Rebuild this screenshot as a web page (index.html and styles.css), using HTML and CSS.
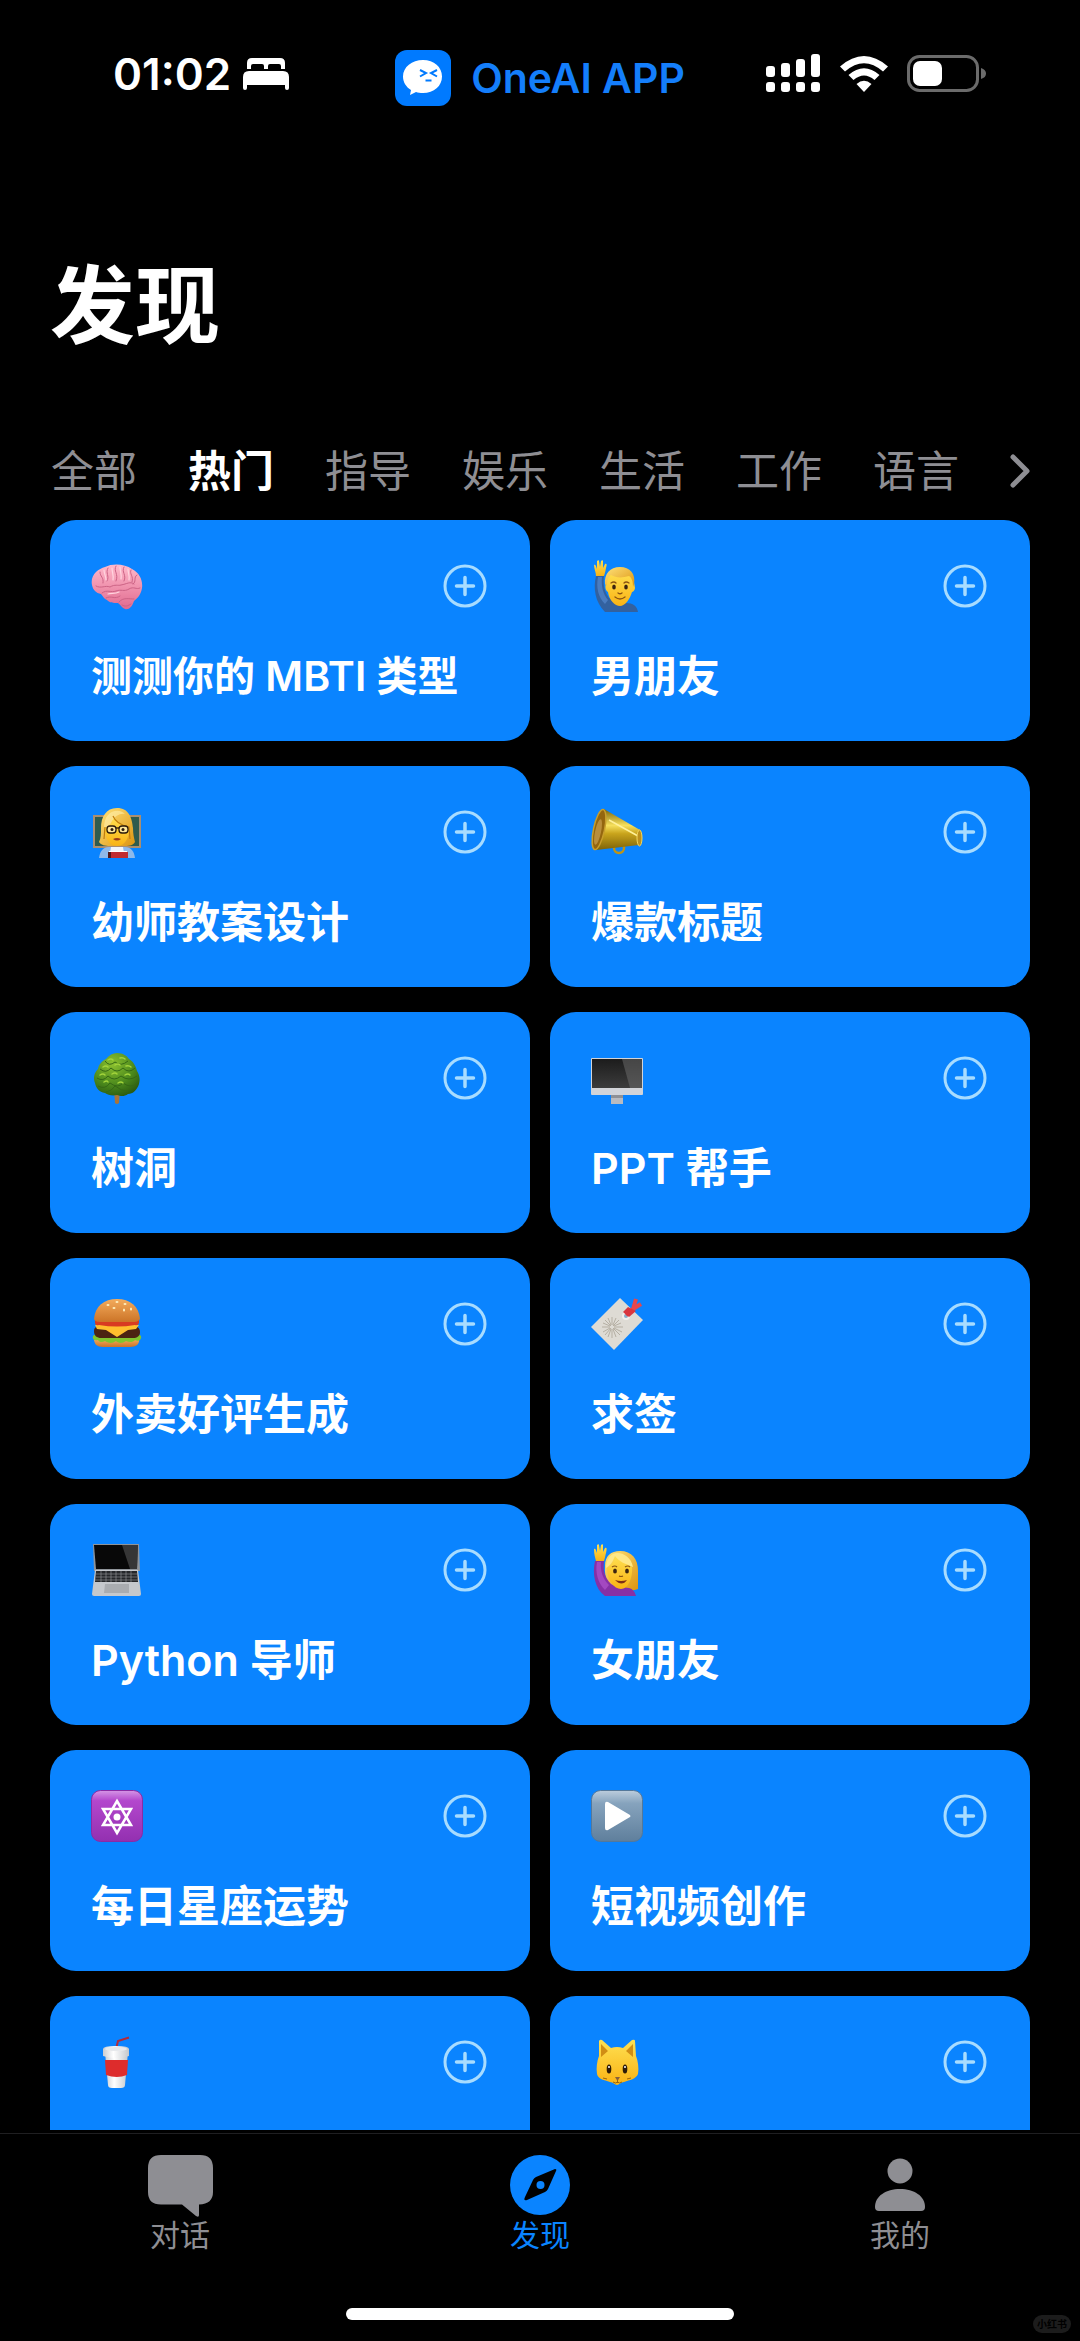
FILE: index.html
```html
<!DOCTYPE html>
<html lang="zh-CN">
<head>
    <meta charset="UTF-8">
    <meta name="viewport" content="width=device-width, initial-scale=1.0">
    <title>OneAI APP - 发现</title>
    <link rel="stylesheet" href="styles.css">
</head>
<body>
<svg class="defs" aria-hidden="true">
    <symbol id="plus" viewBox="0 0 44 44">
        <circle cx="22" cy="22" r="20" fill="none" stroke="currentColor" stroke-width="3"/>
        <path d="M22 13.500v17M13.500 22h17" stroke="currentColor" stroke-width="3.500" stroke-linecap="round"/>
    </symbol>
    <linearGradient id="pink" x1="0" y1="0" x2="0" y2="1"><stop offset="0" stop-color="#ffb9cb"/><stop offset="1" stop-color="#e06a8f"/></linearGradient>
    <linearGradient id="skin" x1="0" y1="0" x2="0" y2="1"><stop offset="0" stop-color="#ffe052"/><stop offset="1" stop-color="#f9b314"/></linearGradient>
    <linearGradient id="hair" x1="0" y1="0" x2="1" y2="1"><stop offset="0" stop-color="#ffe27a"/><stop offset="1" stop-color="#dd9410"/></linearGradient>
    <linearGradient id="gold" x1="0" y1="0" x2="0" y2="1"><stop offset="0" stop-color="#7a6208"/><stop offset=".4" stop-color="#f6e05c"/><stop offset=".6" stop-color="#c9a41c"/><stop offset="1" stop-color="#7d6208"/></linearGradient>
    <linearGradient id="glass" x1="0" y1="0" x2="0" y2="1"><stop offset="0" stop-color="#1c1c1c"/><stop offset="1" stop-color="#3c3c3c"/></linearGradient>
    <linearGradient id="bun" x1="0" y1="0" x2="0" y2="1"><stop offset="0" stop-color="#f3ab5c"/><stop offset="1" stop-color="#cc7427"/></linearGradient>
    <linearGradient id="purple" x1="0" y1="0" x2="0" y2="1"><stop offset="0" stop-color="#d596e6"/><stop offset=".2" stop-color="#b347cd"/><stop offset="1" stop-color="#9330b0"/></linearGradient>
    <linearGradient id="slate" x1="0" y1="0" x2="0" y2="1"><stop offset="0" stop-color="#bccddd"/><stop offset=".25" stop-color="#86a3bd"/><stop offset="1" stop-color="#5f7f9c"/></linearGradient>
    <linearGradient id="cup" x1="0" y1="0" x2="1" y2="0"><stop offset="0" stop-color="#c9ccd0"/><stop offset=".4" stop-color="#ffffff"/><stop offset="1" stop-color="#c4c7cb"/></linearGradient>
    <radialGradient id="leaf" cx=".4" cy=".25" r=".8"><stop offset="0" stop-color="#8cc12f"/><stop offset=".6" stop-color="#4c8a1d"/><stop offset="1" stop-color="#2a5a10"/></radialGradient>
</svg>

<header class="statusbar">
    <div class="status-left">
        <time>01:02</time>
        <svg class="bed" viewBox="0 0 46 32" aria-hidden="true">
            <path fill="#fff" d="M4 11V5q0-5 5-5h28q5 0 5 5v6h-4V8q0-2-2-2H27q-2 0-2 2v3h-4V8q0-2-2-2H10q-2 0-2 2v3zM0 19q0-6 6-6h34q6 0 6 6v11q0 2-2 2t-2-2v-3H4v3q0 2-2 2t-2-2z"/>
        </svg>
    </div>
    <div class="brand">
        <svg class="logo" viewBox="0 0 56 56" aria-hidden="true">
            <rect width="56" height="56" rx="12" fill="#007aff"/>
            <path fill="#fff" d="M28 10c11 0 19 7 19 16.500S39 43 28 43c-3 0-5-.4-7-1l-6 3 1-5C11 37 8 32 8 26.500 8 17 17 10 28 10z"/>
            <path fill="none" stroke="#007aff" stroke-width="2" d="M25 20l6 3-6 3.500M42 20l-6 3 6 3.500M30.500 30.500h6"/>
        </svg>
        <span>OneAI APP</span>
    </div>
    <div class="status-right">
        <svg class="signal" viewBox="0 0 55 40" fill="#fff" aria-hidden="true">
            <rect x="0" y="12" width="9" height="11" rx="3"/><rect x="15" y="9" width="9" height="14" rx="3"/><rect x="30" y="5" width="9" height="18" rx="3"/><rect x="45" y="0" width="9" height="23" rx="3"/>
            <rect x="0" y="28" width="9" height="10" rx="3"/><rect x="15" y="28" width="9" height="10" rx="3"/><rect x="30" y="28" width="9" height="10" rx="3"/><rect x="45" y="28" width="9" height="10" rx="3"/>
        </svg>
        <svg class="wifi" viewBox="0 0 48 36" aria-hidden="true">
            <path fill="#fff" d="M24 36l-7.500-8q7.500-6.500 15 0zM8.500 19l5 5q10.500-9 21 0l5-5Q24 5.500 8.500 19zM0 10.500l5 5q19-16.500 38 0l5-5Q24-10.500 0 10.500z"/>
        </svg>
        <svg class="battery" viewBox="0 0 80 38" aria-hidden="true">
            <rect x="1.500" y="1.500" width="69" height="34" rx="11" fill="none" stroke="#6b6b6b" stroke-width="3"/>
            <path d="M74 13q5 1.500 5 5.500t-5 5.500z" fill="#6b6b6b"/>
            <rect x="6" y="6" width="29" height="25" rx="7" fill="#fff"/>
        </svg>
    </div>
</header>

<h1>发现</h1>

<nav class="categories" aria-label="分类">
    <button type="button">全部</button>
    <button type="button" class="active">热门</button>
    <button type="button">指导</button>
    <button type="button">娱乐</button>
    <button type="button">生活</button>
    <button type="button">工作</button>
    <button type="button">语言</button>
    <button type="button" class="more" aria-label="更多">
        <svg viewBox="0 0 20 34" fill="none" stroke="#8e8e93" stroke-width="5" stroke-linecap="round" stroke-linejoin="round"><path d="M3 3l14 14L3 31"/></svg>
    </button>
</nav>

<main class="cards">
    <article class="card">
        <svg class="emoji" viewBox="0 0 52 52">
            <path fill="url(#pink)" d="M1 25C-1 15 7 9 14 7 22 3 34 4 41 9c8 4 11 12 10 19-1 6-4 10-8 13-2 6-5 9-9 8-3-1-4-4-7-6-5 0-8 0-11-3-3-1-4-4-6-6-5-1-8-4-9-9z"/>
            <path fill="none" stroke="#cc6385" stroke-width="1" stroke-linecap="round" d="M5 26c5 3 9-1 14 1 5-3 8-1 11-2 6-1 9-4 13-1M9 12c0 5 4 5 3 11M17 8c-3 5 2 8-1 13M25 6c-3 5 3 8 0 15M33 7c-3 5 3 8 0 14M40 10c-2 4 3 6 1 12M46 15c-4 2 0 7-4 9M11 33c5-4 9 0 14-2s8 1 13-2 7 1 11-1M28 42c4-5 10-3 15-3M15 38c5-3 9 2 14-2M31 45c3 2 6 1 9-1"/>
            <path fill="none" stroke="#ffd5df" stroke-width="1.200" stroke-linecap="round" d="M13 10c0 4 2 6 2 10M21 8c0 4 2 8 1 12M29 7c0 4 2 8 1 12M37 9c0 4 2 7 1 11M17 34c4-1 7 0 11-2"/>
        </svg>
        <button type="button" class="add" aria-label="添加"><svg><use href="#plus"/></svg></button>
        <h2 class="long">测测你的 MBTI 类型</h2>
    </article>
    <article class="card">
        <svg class="emoji" viewBox="0 0 52 52">
            <path fill="#33619f" d="M5 16h8c-1 8 0 15 5 22 6 3 12 5 17 5 7 0 11 3 12 9H14C4 42 2 28 5 16z"/>
            <path fill="#4a7cc0" d="M7 17h4c-1 9 1 17 6 23l-3 4C7 37 5 27 7 17z"/>
            <path fill="url(#skin)" d="M5 16c0-4-2-7-2-11 1-1 2 0 3 4L6 1c1-1 2-1 2 0l1 6 1-6c1-1 2-1 2 0v7l2-4c2-1 2 1 1 4-1 5-1 5-2 8z"/>
            <path fill="url(#skin)" d="M15 22c1-8 6-11 14-11s13 4 14 11l1 6c0 2-2 4-3 4-2 7-7 14-12 14s-11-6-12-14c-3-2-3-5-2-10z"/>
            <path fill="url(#hair)" d="M14 24c-1-10 5-17 15-17s16 7 14 17l-1 3c0-5-1-9-4-11-7 2-13 2-18-1-3 2-4 5-4 11z"/>
            <ellipse cx="23" cy="27" rx="1.800" ry="2.500" fill="#3b2410"/><ellipse cx="35" cy="27" rx="1.800" ry="2.500" fill="#3b2410"/>
            <path fill="none" stroke="#8c5512" stroke-width="1.300" stroke-linecap="round" d="M20 23q3-2 5 0M33 23q2-2 5 0M27 33q2 1.500 4 0M24 37q5 4 10 0"/>
        </svg>
        <button type="button" class="add" aria-label="添加"><svg><use href="#plus"/></svg></button>
        <h2>男朋友</h2>
    </article>
    <article class="card">
        <svg class="emoji" viewBox="0 0 52 52">
            <rect x="2" y="9" width="48" height="33" fill="#a98e70"/><rect x="4" y="11" width="44" height="29" fill="#2f5b4e"/>
            <path fill="url(#hair)" d="M26 2c12 0 15 10 16 20 0 6 1 10 2 14-2 4-7 4-12 4H19c-5 0-9-1-11-4 2-4 2-8 2-14C10 11 15 2 26 2z"/>
            <path fill="#8eb9ea" d="M8 52c1-7 4-11 10-11h16c6 0 9 4 10 11z"/>
            <path fill="#f3f5f8" d="M20 41h12l1 6H19z"/>
            <path fill="url(#skin)" d="M14 21c6-2 8-6 8-11 4 6 9 8 16 11 1 10-4 19-12 19s-13-9-12-19z"/>
            <path fill="#fff0ae" d="M17 9c5-6 14-5 17-1-5-1-10 2-13 7-2 4-4 6-8 7 0-5 1-10 4-13z" opacity=".6"/>
            <path fill="none" stroke="#c17d0c" stroke-width="1.200" d="M22 10q3 8 16 11l1 12M14 21l-1 12"/>
            <rect x="16" y="20" width="9" height="7" rx="3" fill="#ffe899" stroke="#2a1a0c" stroke-width="1.300"/><rect x="28" y="20" width="9" height="7" rx="3" fill="#ffe899" stroke="#2a1a0c" stroke-width="1.300"/>
            <path stroke="#2a1a0c" stroke-width="1.300" d="M25 22h3"/>
            <circle cx="21" cy="23.500" r="1.500" fill="#2a1a0c"/><circle cx="32" cy="23.500" r="1.500" fill="#2a1a0c"/>
            <path fill="#9a3b1a" d="M22 33q4-2 8 0-4 3-8 0z"/>
            <rect x="17" y="46" width="20" height="6" fill="#c02c31"/><rect x="17" y="46" width="3" height="6" fill="#52181a"/><path stroke="#fff" d="M18 45.500h18"/>
        </svg>
        <button type="button" class="add" aria-label="添加"><svg><use href="#plus"/></svg></button>
        <h2>幼师教案设计</h2>
    </article>
    <article class="card">
        <svg class="emoji" viewBox="0 0 52 52">
            <circle cx="28" cy="42" r="5" fill="none" stroke="#bd9418" stroke-width="2.500"/>
            <path fill="url(#gold)" d="M13 3l36 21c3 3 2 13-1 15L5 44z"/>
            <path fill="none" stroke="#fff19a" stroke-width="1.500" d="M18 14l29 16"/>
            <ellipse cx="8" cy="23.500" rx="5.500" ry="20.500" transform="rotate(12 8 23.500)" fill="#94660f" stroke="#c79e2c" stroke-width="1.500"/>
            <ellipse cx="7" cy="26" rx="3" ry="13" transform="rotate(12 7 26)" fill="#b98e3c"/>
            <ellipse cx="48.500" cy="32" rx="2.500" ry="8" fill="#bb8f1d" stroke="#f3d75e"/>
        </svg>
        <button type="button" class="add" aria-label="添加"><svg><use href="#plus"/></svg></button>
        <h2>爆款标题</h2>
    </article>
    <article class="card">
        <svg class="emoji" viewBox="0 0 52 52">
            <path fill="#a8743a" d="M23 38h6l-1 13q-2 2-4 0z"/>
            <path fill="url(#leaf)" d="M26 1c6 0 10 3 12 6 5 3 7 8 8 12 3 5 3 9 2 13-2 6-6 10-11 10-4 3-8 2-11 1-5 1-9 0-12-2-6-1-9-5-10-10-2-5-1-10 3-14 1-5 4-8 8-10 3-4 7-6 11-6z"/>
            <g fill="none" stroke="#356815" stroke-width="1"><path d="M14 9q4 6 10 1 6 5 13-1M9 17q6 5 11-1 6 6 12 0 6 6 12 0M6 26q6 4 11-2 6 6 13 0 8 6 16 0M7 34q7 4 12-3 8 6 13 0 8 6 14 0M15 40q6-1 9-6 6 5 13 5"/></g>
            <g fill="none" stroke="#a2d33b" stroke-width="1.500" stroke-linecap="round"><path d="M17 8q3-2 5 0M29 6q3-1 5 1M12 15q3-2 5 0M24 13q3-2 5 0M35 14q3-1 5 1M9 23q3-2 5 0M21 22q3-2 5 0M34 23q3-2 5 0M13 30q3-2 4 0M27 31q3-2 5 0"/></g>
        </svg>
        <button type="button" class="add" aria-label="添加"><svg><use href="#plus"/></svg></button>
        <h2>树洞</h2>
    </article>
    <article class="card">
        <svg class="emoji" viewBox="0 0 52 52">
            <path fill="#b9bbc0" d="M20 42h12v10H20z"/><path fill="#8f9196" d="M20 43h12v3H20z"/>
            <rect y="6" width="52" height="37" rx="1" fill="#d2d4d9"/>
            <rect x="1" y="7" width="50" height="29" fill="url(#glass)"/>
            <path fill="#707070" opacity=".5" d="M31 7h20v29H39z"/>
        </svg>
        <button type="button" class="add" aria-label="添加"><svg><use href="#plus"/></svg></button>
        <h2>PPT 帮手</h2>
    </article>
    <article class="card">
        <svg class="emoji" viewBox="0 0 52 52">
            <path fill="url(#bun)" d="M3 41h45c1 5-3 8-9 8H12c-6 0-9-3-9-8z"/>
            <path fill="#80c52f" d="M2 38q2-3 6 0h36q4-3 6 0c1 4-3 6-6 4-3 3-6 2-9 1-4 3-8 2-10 0-4 3-8 2-11 0-3 2-6 1-7-1-4 1-6-1-5-4z"/>
            <path fill="#4c2412" d="M3 33c0-4 3-5 7-5h32c4 0 7 2 7 6s-3 6-7 6H10c-4 0-7-2-7-7z"/>
            <path fill="#ffbf2e" d="M4 27h44l-3 4-8 1-11 7-11-7-9-1z"/>
            <path fill="#d83b22" d="M4 22h44v3q-1 3-4 2-18 3-36 0-4 1-4-2z"/>
            <path fill="url(#bun)" d="M3 21C4 8 13 1 26 1s22 7 23 20c-2 3-5 3-8 3H11c-3 0-7 0-8-3z"/>
            <g fill="#fff0be"><ellipse cx="17" cy="7" rx="1.500" ry="1"/><ellipse cx="26" cy="4" rx="1.500" ry="1"/><ellipse cx="34" cy="6" rx="1.500" ry="1"/><ellipse cx="23" cy="10" rx="1.500" ry="1"/><ellipse cx="33" cy="12" rx="1" ry="1.500"/><ellipse cx="40" cy="11" rx="1" ry="1.500"/></g>
        </svg>
        <button type="button" class="add" aria-label="添加"><svg><use href="#plus"/></svg></button>
        <h2>外卖好评生成</h2>
    </article>
    <article class="card">
        <svg class="emoji" viewBox="0 0 52 52">
            <path fill="#dedbd4" d="M29 0l23 22-29 30L0 29z"/>
            <path stroke="#b5afa3" stroke-width="1" d="M21 19v8M21 31v9M11 29h8M23 29h9M14 22l6 6M22 30l7 7M28 22l-6 6M20 30l-6 7M17 20l3 7M22 31l3 8M12 25l7 3M23 30l8 4M25 20l-3 7M20 31l-3 8M30 25l-7 3M19 30l-7 4"/>
            <circle cx="35" cy="18" r="4" fill="#f2f0ed"/><circle cx="35" cy="18" r="2" fill="#89aeca"/>
            <path fill="none" stroke="#e6474c" stroke-width="4" stroke-linejoin="round" d="M35 17l7-6 3-10M42 11l8-5"/><path fill="#d9363f" d="M32 14l5-5 8 4-7 6z"/>
        </svg>
        <button type="button" class="add" aria-label="添加"><svg><use href="#plus"/></svg></button>
        <h2>求签</h2>
    </article>
    <article class="card">
        <svg class="emoji" viewBox="0 0 52 52">
            <path fill="#8f949a" d="M2 0h46l1 27H3z"/><path fill="#080808" d="M3 1h44l-1 24H5z"/><path fill="#555" opacity=".6" d="M31 1h16l-1 24h-7z"/>
            <path fill="#c5c8cc" d="M4 26h43l3 24q0 2-2 2H3q-2 0-2-2z"/>
            <path fill="#25272a" d="M5 27h41l1 11H4z"/>
            <path stroke="#93979c" d="M5 30h41M5 33h41M4 36h43M10 27v11M15 27v11M20 27v11M25 27v11M30 27v11M35 27v11M40 27v11" stroke-width=".6"/>
            <path fill="#a9acb0" d="M14 40h24v9H13z"/>
        </svg>
        <button type="button" class="add" aria-label="添加"><svg><use href="#plus"/></svg></button>
        <h2>Python 导师</h2>
    </article>
    <article class="card">
        <svg class="emoji" viewBox="0 0 52 52">
            <path fill="url(#hair)" d="M14 22C14 12 20 7 29 7c12 0 18 8 18 20v18c-6 2-14 2-20 0-9-2-14-10-13-23z"/>
            <path fill="#8730a5" d="M4 17h9c-1 8 0 16 7 23 7 4 12 3 18 4 4 1 6 4 7 8H14C4 45 1 30 4 17z"/>
            <path fill="#a348c1" d="M6 18h4c-1 9 2 17 8 23l-4 5C7 39 4 29 6 18z"/>
            <path fill="url(#skin)" d="M5 17c-1-4-2-7-2-12 1-1 2 0 3 4L6 1c1-1 2-1 2 0l1 6 1-6c1-1 2-1 2 0v7l2-4c2-1 2 1 1 5-1 4-1 5-2 8z"/>
            <path fill="url(#skin)" d="M16 24c4-2 7-7 8-13 5 7 11 7 17 12 1 11-4 22-11 22S16 36 16 24z"/>
            <path fill="#ffe887" d="M22 10c6-3 18 1 20 13-7-3-14-5-18-11-2 5-4 9-9 12 0-6 2-11 7-14z"/>
            <ellipse cx="24" cy="27" rx="1.900" ry="2.500" fill="#3b2410"/><ellipse cx="36" cy="27" rx="1.900" ry="2.500" fill="#3b2410"/>
            <path fill="none" stroke="#8c5512" stroke-width="1.200" d="M21 23q3-2 5 0M34 23q3-2 5 0M28 32q2 1 4 0"/><path fill="#7d2d17" d="M24 36q6 2 12 0-5 7-12 0z"/>
        </svg>
        <button type="button" class="add" aria-label="添加"><svg><use href="#plus"/></svg></button>
        <h2>女朋友</h2>
    </article>
    <article class="card">
        <svg class="emoji" viewBox="0 0 52 52">
            <rect x=".5" y=".5" width="51" height="51" rx="9" fill="url(#purple)" stroke="#8a2ba5"/>
            <path fill="none" stroke="#fff" stroke-width="2.500" d="M26 11l14 24H12zM26 43l14-24H12z"/><circle cx="26" cy="27" r="3.500" fill="#fff"/>
        </svg>
        <button type="button" class="add" aria-label="添加"><svg><use href="#plus"/></svg></button>
        <h2>每日星座运势</h2>
    </article>
    <article class="card">
        <svg class="emoji" viewBox="0 0 52 52">
            <rect x=".5" y=".5" width="51" height="51" rx="9" fill="url(#slate)" stroke="#54789a"/>
            <path fill="#fff" d="M14 14q0-3 3-2l22 13q1 1.500 0 2L17 40q-3 1-3-2z"/>
        </svg>
        <button type="button" class="add" aria-label="添加"><svg><use href="#plus"/></svg></button>
        <h2>短视频创作</h2>
    </article>
    <article class="card">
        <svg class="emoji" viewBox="0 0 52 52">
            <path fill="none" stroke="#b32a3a" stroke-width="2" d="M38 1.500L27 5l-2 8"/>
            <path fill="url(#cup)" d="M14 16h23l-3 33q0 3-4 3h-9q-4 0-4-3z"/>
            <path fill="#dd2c2c" d="M14 24h23l-1 15q-10 4-21 0z"/>
            <path fill="url(#cup)" d="M12 13q0-3 13-3t13 3v7q-13 4-26 0z"/>
            <ellipse cx="25" cy="13" rx="11" ry="2" fill="#e7e9ec"/>
        </svg>
        <button type="button" class="add" aria-label="添加"><svg><use href="#plus"/></svg></button>
    </article>
    <article class="card">
        <svg class="emoji" viewBox="0 0 52 52">
            <path fill="url(#skin)" d="M8 5q1-2 3-1l9 8q6-2 12 0l9-8q3-1 3 1l1 15c2 5 3 12 2 18-2 5-8 6-14 8-3 0-5 3-7 3s-4-3-7-3c-6-2-12-3-13-8-1-6 0-13 2-18z"/>
            <path fill="#d18d14" d="M10 8l7 7-7 6zM42 8l-7 7 7 6z"/>
            <ellipse cx="18" cy="33" rx="2.300" ry="4.500" fill="#2d1b08"/><ellipse cx="34" cy="33" rx="2.300" ry="4.500" fill="#2d1b08"/>
            <circle cx="18" cy="31" r="1" fill="#fff"/><circle cx="34" cy="31" r="1" fill="#fff"/>
            <path fill="#85603e" d="M24 41h5l-2.500 4z"/><path fill="none" stroke="#9a650c" d="M26.500 44v3M22 46q3 2 4.500 0 2 2 4.500 0M12 42l4 1M40 42l-4 1"/>
        </svg>
        <button type="button" class="add" aria-label="添加"><svg><use href="#plus"/></svg></button>
    </article>
</main>

<footer class="tabbar">
    <nav class="tabs">
        <a href="#chat">
            <svg viewBox="0 0 65 62" aria-hidden="true"><path fill="#8e8e93" d="M13 0h39q13 0 13 13v24q0 12-14 12.500V60q0 3-3 1L34 49.500H13Q0 49.500 0 37V13Q0 0 13 0z"/></svg>
            <span>对话</span>
        </a>
        <a href="#discover" class="active">
            <svg viewBox="0 0 60 62" aria-hidden="true"><circle cx="30" cy="30" r="30" fill="#0a84ff"/><path d="M45 14q2 0 1 2l-8 18q-1 2-3 3l-18 8q-4 1-2-3l8-17q1-2 3-3z"/><circle cx="30.500" cy="30" r="4" fill="#0a84ff"/></svg>
            <span>发现</span>
        </a>
        <a href="#mine">
            <svg viewBox="0 0 50 62" aria-hidden="true"><circle cx="25" cy="16" r="12.500" fill="#8e8e93"/><path fill="#8e8e93" d="M0 52c0-11 11-18 25-18s25 7 25 18q0 4-4 4H4q-4 0-4-4z"/></svg>
            <span>我的</span>
        </a>
    </nav>
    <div class="home-indicator"></div>
    <span class="watermark">小红书</span>
</footer>
</body>
</html>
```
FILE: styles.css
```css
* {
    box-sizing: border-box;
}

body {
    margin: 0;
    height: 100vh;
    display: flex;
    flex-direction: column;
    overflow: hidden;
    background: #000;
    color: #fff;
    font-family: Inter, "Noto Sans CJK SC", sans-serif;
}

button {
    padding: 0;
    border: none;
    background: none;
    color: inherit;
    font: inherit;
    cursor: pointer;
}

svg {
    display: block;
}

.defs {
    position: absolute;
    width: 0;
    height: 0;
}

/* status bar */
.statusbar {
    display: grid;
    grid-template-columns: 1fr auto 1fr;
    padding: 50px 93px 0;
    margin-bottom: 151px;
}

.status-left,
.status-right {
    display: flex;
    align-items: center;
    height: 48px;
}

.status-left {
    gap: 12px;
    padding-left: 20px;
    font-size: 44px;
    font-weight: 600;
}

.status-right {
    justify-content: flex-end;
    gap: 19px;
}

.bed {
    width: 46px;
    height: 32px;
}

.brand {
    display: flex;
    align-items: center;
    gap: 20px;
    height: 56px;
    color: #147efb;
    font-size: 41px;
    font-weight: 600;
}

.logo {
    width: 56px;
    height: 56px;
}

.signal {
    width: 55px;
    height: 40px;
}

.wifi {
    width: 48px;
    height: 36px;
}

.battery {
    width: 80px;
    height: 38px;
}

h1 {
    margin: 0;
    padding: 0 50px;
    font-size: 85px;
    font-weight: 600;
    line-height: 100px;
}

/* category strip */
.categories {
    display: flex;
    align-items: center;
    gap: 51px;
    margin-top: 84px;
    padding: 0 52px 0 51px;
    font-size: 43px;
    line-height: 60px;
    color: #8e8e93;
}

.categories button {
    flex: none;
}

.categories .active {
    color: #fff;
    font-weight: 600;
}

.categories .more {
    margin-left: auto;
}

.more svg {
    width: 20px;
    height: 34px;
}

/* cards */
.cards {
    flex: 1;
    min-height: 0;
    overflow: hidden;
    display: grid;
    grid-template-columns: 1fr 1fr;
    align-content: start;
    gap: 25px 20px;
    margin-top: 19px;
    padding: 0 50px;
}

.card {
    display: grid;
    grid-template-columns: 1fr auto;
    align-content: start;
    align-items: center;
    row-gap: 38px;
    min-height: 221px;
    padding: 40px 43px 39px 41px;
    border-radius: 26px;
    background: #0a84ff;
}

.emoji {
    width: 52px;
    height: 52px;
}

.add {
    color: #a8dcff;
}

.add svg {
    width: 44px;
    height: 44px;
}

.card h2 {
    grid-column: 1 / -1;
    margin: 0;
    font-size: 43px;
    font-weight: 600;
    line-height: 52px;
    white-space: nowrap;
}

.card .long {
    font-size: 41px;
}

/* bottom bar */
.tabbar {
    position: relative;
    margin-top: 3px;
    padding: 21px 0;
    border-top: 1px solid #1f1f21;
}

.tabs {
    display: grid;
    grid-template-columns: repeat(3, 1fr);
}

.tabs a {
    display: flex;
    flex-direction: column;
    align-items: center;
    color: #8e8e93;
    font-size: 30px;
    line-height: 36px;
    text-decoration: none;
}

.tabs svg {
    height: 62px;
}

.tabs .active {
    color: #0a84ff;
}

.home-indicator {
    width: 36%;
    height: 12px;
    margin: 55px auto 0;
    border-radius: 6px;
    background: #fff;
}

.watermark {
    position: absolute;
    right: 9px;
    bottom: 8px;
    padding: 0 4px;
    border-radius: 9px;
    background: #1c1c1c;
    color: #000;
    font-size: 10px;
    font-weight: 700;
    line-height: 18px;
}
```
